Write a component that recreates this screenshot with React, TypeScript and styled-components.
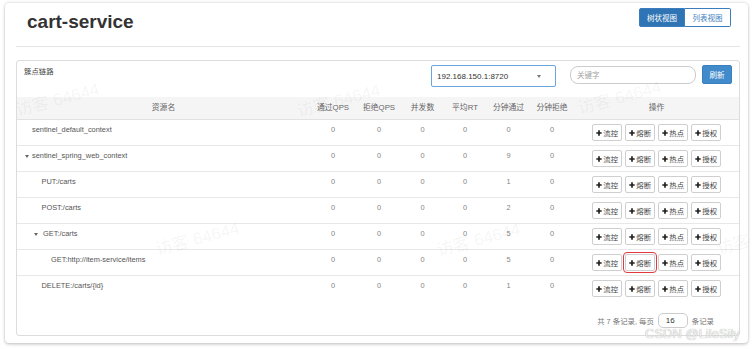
import React from "react";
import styled, { createGlobalStyle, css } from "styled-components";

const FONT = `"Liberation Sans", "Noto Sans CJK SC", sans-serif`;

const GlobalStyle = createGlobalStyle`
  *, *::before, *::after { box-sizing: border-box; }
  html, body { margin: 0; padding: 0; background: #fff; }
  body { font-family: ${FONT}; color: #555; }
`;

const Page = styled.div`
  position: relative;
  width: 752px;
  height: 349px;
  padding: 3px 4px 6px 5px;
  overflow: hidden;
`;

const Card = styled.div`
  height: 340px;
  background: #fff;
  border-radius: 4px;
  box-shadow: 0 0 3px rgba(0, 0, 0, 0.22), 0 2px 3px rgba(0, 0, 0, 0.12);
  padding: 0 8px 0 11px;
  display: flex;
  flex-direction: column;
`;

const Header = styled.div`
  height: 44px;
  display: flex;
  justify-content: space-between;
  align-items: flex-start;
  padding: 5px 9px 0 11px;
  border-bottom: 1px solid #e5e5e5;
`;

const Title = styled.h1`
  margin: 2.5px 0 0;
  font-size: 19px;
  line-height: 22px;
  font-weight: 700;
  color: #333;
`;

const ToggleGroup = styled.div`
  display: flex;
`;

const ToggleButton = styled.div<{ $active?: boolean; $pos: "first" | "last" }>`
  width: 46px;
  height: 19px;
  display: flex;
  align-items: center;
  justify-content: center;
  font-size: 7.5px;
  border: 1px solid #3a7cbd;
  ${(p) =>
    p.$pos === "first"
      ? css`border-radius: 2px 0 0 2px;`
      : css`border-radius: 0 2px 2px 0; border-left: none;`}
  ${(p) =>
    p.$active
      ? css`background: #2f74b4; color: #fff;`
      : css`background: #fff; color: #3f7fbf;`}
`;

const Panel = styled.div`
  margin-top: 13px;
  height: 276px;
  border: 1px solid #dcdcdc;
  border-radius: 3px;
  display: flex;
  flex-direction: column;
`;

const PanelHeading = styled.div`
  height: 36px;
  display: flex;
  align-items: flex-start;
  padding: 4px 7px 0 7px;
`;

const PanelTitle = styled.div`
  margin-top: 2px;
  font-size: 7.4px;
  line-height: 10.5px;
  color: #444;
`;

const SelectBox = styled.div`
  margin-left: auto;
  width: 125px;
  height: 22px;
  border: 1px solid #6aa6dc;
  border-radius: 2px;
  display: flex;
  align-items: center;
  justify-content: space-between;
  padding: 0 14px 0 5px;
  font-size: 8px;
  color: #333;
`;

const Caret = styled.span`
  width: 0;
  height: 0;
  border-left: 2.5px solid transparent;
  border-right: 2.5px solid transparent;
  border-top: 3px solid #777;
`;

const SearchInput = styled.input`
  margin: 1px 0 0 14px;
  width: 126px;
  height: 18px;
  border: 1px solid #ccc;
  border-radius: 8px;
  padding: 0 6px;
  font-family: ${FONT};
  font-size: 7.5px;
  outline: none;
  &::placeholder { color: #a0a0a0; }
`;

const RefreshButton = styled.div`
  margin-left: 6px;
  width: 30px;
  height: 19px;
  background: #428bca;
  border: 1px solid #3a80bf;
  border-radius: 2px;
  color: #fff;
  font-size: 7.5px;
  display: flex;
  align-items: center;
  justify-content: center;
`;

const COLS = "293px 46px 46px 41px 44px 43px 44px 165px";

const HeadRow = styled.div`
  display: grid;
  grid-template-columns: ${COLS};
  height: 23px;
  background: #f5f5f6;
  border-bottom: 1px solid #e2e2e2;
`;

const HeadCell = styled.div`
  text-align: center;
  line-height: 22px;
  font-size: 7.8px;
  color: #666;
  white-space: nowrap;
`;

const Row = styled.div<{ $last?: boolean }>`
  display: grid;
  grid-template-columns: ${COLS};
  height: 26px;
  border-bottom: ${(p) => (p.$last ? "none" : "1px solid #e8e8e8")};
`;

const NameCell = styled.div<{ $pad: number }>`
  padding: 4.5px 0 0 ${(p) => p.$pad}px;
  font-size: 7.4px;
  line-height: 10.5px;
  color: #555;
  display: flex;
  align-items: flex-start;
  white-space: nowrap;
`;

const TreeArrow = styled.span<{ $gap: number }>`
  display: inline-block;
  margin-top: 4px;
  margin-right: ${(p) => p.$gap}px;
  width: 0;
  height: 0;
  border-left: 2.5px solid transparent;
  border-right: 2.5px solid transparent;
  border-top: 3.5px solid #666;
`;

const NumCell = styled.div`
  padding-top: 4.5px;
  text-align: center;
  font-size: 7.4px;
  line-height: 10.5px;
  color: #858585;
`;

const OpCell = styled.div`
  padding-top: 4px;
  display: flex;
  justify-content: center;
  gap: 3px;
`;

const OpButton = styled.div<{ $highlight?: boolean }>`
  width: 30px;
  height: 17px;
  border: 1px solid #cfcfcf;
  border-radius: 2px;
  background: #fff;
  display: flex;
  align-items: center;
  justify-content: center;
  gap: 1.5px;
  font-size: 7.4px;
  color: #444;
  ${(p) =>
    p.$highlight &&
    css`
      outline: 1.5px solid #e3383e;
      outline-offset: 1px;
    `}
`;

const Pager = styled.div`
  display: flex;
  justify-content: flex-end;
  align-items: center;
  gap: 4px;
  padding: 11px 25px 0 0;
  font-size: 7.4px;
  color: #777;
`;

const PageSize = styled.input`
  width: 30px;
  height: 15px;
  border: 1px solid #ccc;
  border-radius: 5px;
  padding: 0 0 0 7px;
  font-family: ${FONT};
  font-size: 8px;
  color: #333;
  outline: none;
`;

const WatermarkLayer = styled.div`
  position: absolute;
  inset: 0;
  pointer-events: none;
  z-index: 5;
`;

const Mark = styled.div<{ $x: number; $y: number }>`
  position: absolute;
  left: ${(p) => p.$x}px;
  top: ${(p) => p.$y}px;
  transform: translate(-50%, -50%) rotate(-15deg);
  font-size: 17px;
  color: rgba(0, 0, 0, 0.055);
  white-space: nowrap;
`;

const CsdnMark = styled.div`
  position: absolute;
  left: 645px;
  top: 326px;
  font-size: 13px;
  color: #f2f2f2;
  text-shadow: 0 0 1px #9a9a9a;
  white-space: nowrap;
`;

const PlusIcon = () => (
  <svg width="6" height="6" viewBox="0 0 10 10">
    <path d="M5 0.5v9M0.5 5h9" stroke="#222" strokeWidth="2.8" />
  </svg>
);

type Res = {
  name: string;
  level: number;
  tree?: boolean;
  minutePass: number;
  highlight?: boolean;
};

const rows: Res[] = [
  { name: "sentinel_default_context", level: 0, minutePass: 0 },
  { name: "sentinel_spring_web_context", level: 0, tree: true, minutePass: 9 },
  { name: "PUT:/carts", level: 1, minutePass: 1 },
  { name: "POST:/carts", level: 1, minutePass: 2 },
  { name: "GET:/carts", level: 1, tree: true, minutePass: 5 },
  { name: "GET:http://item-service/items", level: 2, minutePass: 5, highlight: true },
  { name: "DELETE:/carts/{id}", level: 1, minutePass: 1 },
];

const headers = ["资源名", "通过QPS", "拒绝QPS", "并发数", "平均RT", "分钟通过", "分钟拒绝", "操作"];
const ops = ["流控", "熔断", "热点", "授权"];

const marks = [
  { x: 57, y: 98, t: "访客 64644" },
  { x: 338, y: 99, t: "访客 64644" },
  { x: 619, y: 96, t: "访客 64644" },
  { x: 197, y: 237, t: "访客 64644" },
  { x: 478, y: 238, t: "访客 64644" },
  { x: 733, y: 243, t: "访客" },
];

export default function App() {
  return (
    <>
      <GlobalStyle />
      <Page>
        <Card>
          <Header>
            <Title>cart-service</Title>
            <ToggleGroup>
              <ToggleButton $active $pos="first">树状视图</ToggleButton>
              <ToggleButton $pos="last">列表视图</ToggleButton>
            </ToggleGroup>
          </Header>
          <Panel>
            <PanelHeading>
              <PanelTitle>簇点链路</PanelTitle>
              <SelectBox>
                <span>192.168.150.1:8720</span>
                <Caret />
              </SelectBox>
              <SearchInput placeholder="关键字" />
              <RefreshButton>刷新</RefreshButton>
            </PanelHeading>
            <HeadRow>
              {headers.map((h) => (
                <HeadCell key={h}>{h}</HeadCell>
              ))}
            </HeadRow>
            {rows.map((r, i) => (
              <Row key={r.name} $last={i === rows.length - 1}>
                {r.tree ? (
                  <NameCell $pad={8 + 9 * r.level}>
                    <TreeArrow $gap={3 + 2 * r.level} />
                    {r.name}
                  </NameCell>
                ) : (
                  <NameCell $pad={15 + 9.5 * r.level}>{r.name}</NameCell>
                )}
                <NumCell>0</NumCell>
                <NumCell>0</NumCell>
                <NumCell>0</NumCell>
                <NumCell>0</NumCell>
                <NumCell>{r.minutePass}</NumCell>
                <NumCell>0</NumCell>
                <OpCell>
                  {ops.map((o) => (
                    <OpButton key={o} $highlight={r.highlight && o === "熔断"}>
                      <PlusIcon />
                      {o}
                    </OpButton>
                  ))}
                </OpCell>
              </Row>
            ))}
            <Pager>
              <span>共 7 条记录, 每页</span>
              <PageSize readOnly defaultValue="16" />
              <span>条记录</span>
            </Pager>
          </Panel>
        </Card>
        <WatermarkLayer>
          {marks.map((m, i) => (
            <Mark key={i} $x={m.x} $y={m.y}>{m.t}</Mark>
          ))}
          <CsdnMark>CSDN @LileSily</CsdnMark>
        </WatermarkLayer>
      </Page>
    </>
  );
}
